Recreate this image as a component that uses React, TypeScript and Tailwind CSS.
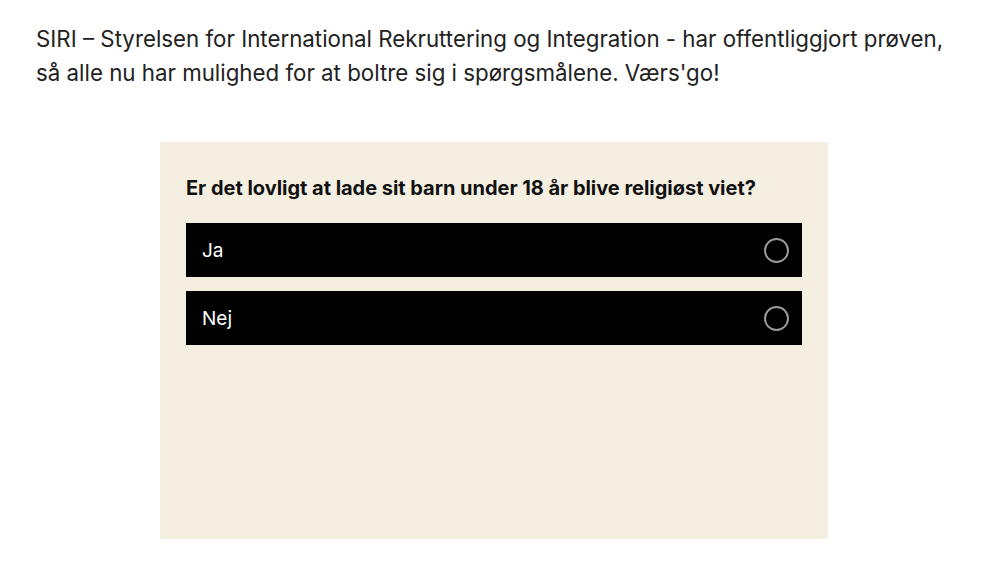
import React from 'react';

const options = ['Ja', 'Nej'];

const App: React.FC = () => {
  return (
    <div className="w-[1000px] h-[570px] bg-white font-['Inter',sans-serif] overflow-hidden">
      <p className="pl-[36px] pr-[30px] pt-[22px] text-[22.3px] leading-[34px] text-[#222222]">
        SIRI – Styrelsen for International Rekruttering og Integration - har offentliggjort prøven,
        så alle nu har mulighed for at boltre sig i spørgsmålene. Værs'go!
      </p>

      <div className="ml-[160px] mt-[52px] w-[668px] h-[397px] bg-[#f5efe1] px-[26px] pt-[32px]">
        <h2 className="text-[20px] leading-[28px] font-bold text-[#111111] tracking-[-0.03px]">
          Er det lovligt at lade sit barn under 18 år blive religiøst viet?
        </h2>
        <div className="mt-[21px] w-[616px] flex flex-col gap-[14px]">
          {options.map((option) => (
            <div key={option} className="h-[54px] bg-black flex items-center justify-between pl-[16px] pr-[13px]">
              <span className="text-white text-[19px] pt-[2px]">{option}</span>
              <span className="w-[25px] h-[25px] rounded-full border-2 border-[#9a9a9a]"></span>
            </div>
          ))}
        </div>
      </div>
    </div>
  );
};

export default App;
